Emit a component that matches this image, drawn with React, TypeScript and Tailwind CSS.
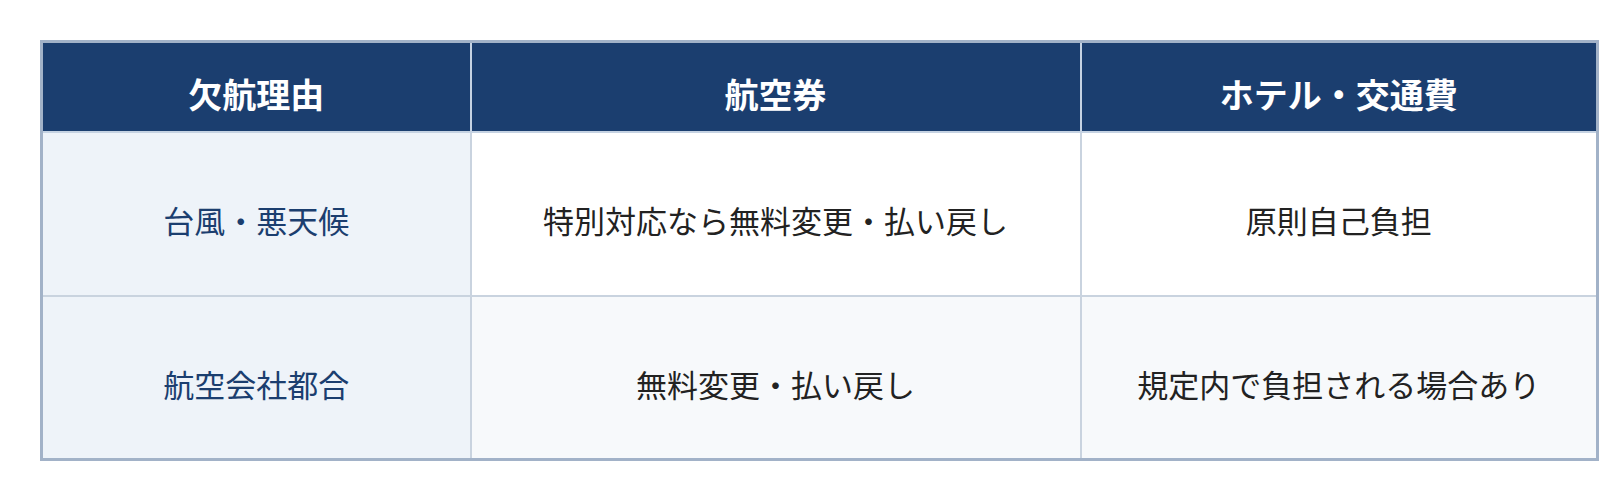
const rows = [
  { reason: "台風・悪天候", ticket: "特別対応なら無料変更・払い戻し", hotel: "原則自己負担", bg: "bg-white" },
  { reason: "航空会社都合", ticket: "無料変更・払い戻し", hotel: "規定内で負担される場合あり", bg: "bg-[#f7f9fb]" },
];

const App = () => {
  return (
    <div
      className="min-h-[500px] bg-white pl-[40px] pt-[40px]"
      style={{ fontFamily: '"Noto Sans CJK JP", "Noto Sans", sans-serif' }}
    >
      <table className="w-[1556px] table-fixed border-collapse border-[3px] border-[#a2b2c8]">
        <colgroup>
          <col className="w-[429px]" />
          <col className="w-[610px]" />
          <col className="w-[517px]" />
        </colgroup>
        <thead>
          {/* Header */}
          <tr className="h-[90px] bg-[#1b3e6f] text-white">
            <th className="border-2 border-[#c5d2e2] pt-[14px] text-[34px] font-bold">欠航理由</th>
            <th className="border-2 border-[#c5d2e2] pt-[14px] text-[34px] font-bold">航空券</th>
            <th className="border-2 border-[#c5d2e2] pt-[14px] text-[34px] font-bold">ホテル・交通費</th>
          </tr>
        </thead>
        <tbody>
          {rows.map((r, i) => (
            <tr key={r.reason} className={i === 0 ? "h-[164px]" : "h-[164px]"}>
              <td className="border-2 border-[#c9d3df] bg-[#eef3f9] pt-[14px] text-center text-[31px] text-[#1b3e6f]">
                {r.reason}
              </td>
              <td className={`border-2 border-[#c9d3df] ${r.bg} pt-[14px] text-center text-[31px] text-[#222]`}>
                {r.ticket}
              </td>
              <td className={`border-2 border-[#c9d3df] ${r.bg} pt-[14px] text-center text-[31px] text-[#222]`}>
                {r.hotel}
              </td>
            </tr>
          ))}
        </tbody>
      </table>
    </div>
  );
};

export default App;
